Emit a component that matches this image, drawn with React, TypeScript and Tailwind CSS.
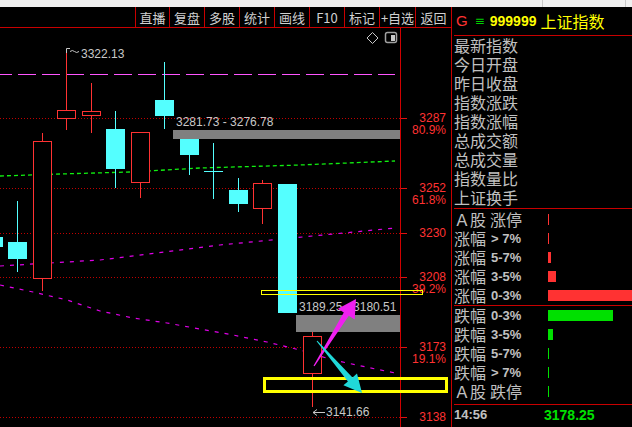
import React from "react";

const RED = "#ff3232";
const CYAN = "#54ffff";
const GRID = "#c00000";

type Candle = { x: number; t: number; b: number; wt: number; wb: number; up: boolean };

const candles: Candle[] = [
  { x: -16, t: 237, b: 247, wt: 237, wb: 247, up: false },
  { x: 8, t: 242, b: 259, wt: 201, wb: 272, up: false },
  { x: 33, t: 141, b: 279, wt: 133, wb: 291, up: true },
  { x: 57, t: 110, b: 119, wt: 50, wb: 130, up: true },
  { x: 82, t: 111, b: 116, wt: 83, wb: 133, up: true },
  { x: 106, t: 129, b: 169, wt: 111, wb: 188, up: false },
  { x: 131, t: 132, b: 183, wt: 132, wb: 198, up: true },
  { x: 155, t: 100, b: 116, wt: 62, wb: 129, up: false },
  { x: 180, t: 137, b: 155, wt: 137, wb: 175, up: false },
  { x: 204, t: 171, b: 172, wt: 143, wb: 199, up: false },
  { x: 229, t: 190, b: 204, wt: 178, wb: 212, up: false },
  { x: 253, t: 183, b: 209, wt: 180, wb: 224, up: true },
  { x: 278, t: 184, b: 313, wt: 184, wb: 313, up: false },
  { x: 303, t: 336, b: 374, wt: 332, wb: 407, up: true },
];

const levels = [
  { y: 118, price: "3287", pct: "80.9%" },
  { y: 188, price: "3252", pct: "61.8%" },
  { y: 233, price: "3230" },
  { y: 277, price: "3208", pct: "39.2%" },
  { y: 347, price: "3173", pct: "19.1%" },
  { y: 417, price: "3138" },
];

const tools = [
  { label: "直播", w: "w-[34px]" },
  { label: "复盘", w: "w-[35px]" },
  { label: "多股", w: "w-[35px]" },
  { label: "统计", w: "w-[35px]" },
  { label: "画线", w: "w-[35px]" },
  { label: "F10", w: "w-[35px]" },
  { label: "标记", w: "w-[35px]" },
  { label: "+自选", w: "w-[36px]" },
  { label: "返回", w: "w-[36px]" },
];

const infoRows = ["最新指数", "今日开盘", "昨日收盘", "指数涨跌", "指数涨幅", "总成交额", "总成交量", "指数量比", "上证换手"];

type Dist = { a: string; b: string; cjk?: boolean; w: number };

const upRows: Dist[] = [
  { a: "Ａ股", b: "涨停", cjk: true, w: 1 },
  { a: "涨幅", b: "> 7%", w: 1 },
  { a: "涨幅", b: "5-7%", w: 3 },
  { a: "涨幅", b: "3-5%", w: 8 },
  { a: "涨幅", b: "0-3%", w: -1 },
];

const downRows: Dist[] = [
  { a: "跌幅", b: "0-3%", w: 65 },
  { a: "跌幅", b: "3-5%", w: 5 },
  { a: "跌幅", b: "5-7%", w: 1 },
  { a: "跌幅", b: "> 7%", w: 1 },
  { a: "Ａ股", b: "跌停", cjk: true, w: 1 },
];

const pts = (p: number[][]) => p.map((q) => q.join(",")).join(" ");

function Chart() {
  return (
    <svg width={451} height={399} viewBox="0 28 451 399" className="block" shapeRendering="crispEdges">
      {/* fib levels */}
      {levels.map((l) => (
        <g key={l.price}>
          <line x1={0} x2={400} y1={l.y + 0.5} y2={l.y + 0.5} stroke={GRID} strokeDasharray="1 2" />
          <line x1={400} x2={407} y1={l.y + 0.5} y2={l.y + 0.5} stroke="#e01010" />
          <text x={446} y={l.y + 4} textAnchor="end" fill={RED} fontSize={12} fontFamily="Liberation Sans">
            {l.price}
          </text>
          {l.pct && (
            <text x={446} y={l.y + 16} textAnchor="end" fill={RED} fontSize={12} fontFamily="Liberation Sans">
              {l.pct}
            </text>
          )}
        </g>
      ))}
      <line x1={400.5} x2={400.5} y1={28} y2={427} stroke="#d00000" />

      {/* moving averages */}
      <line x1={0} x2={395} y1={74.5} y2={74.5} stroke="#ff55ff" strokeWidth={1.5} strokeDasharray="18 6" strokeDashoffset={6} />
      <polyline
        fill="none"
        stroke="#10f010"
        strokeWidth={1.3}
        strokeDasharray="4 3"
        shapeRendering="auto"
        points={pts([[0, 176], [60, 174], [130, 172], [200, 168], [300, 165], [395, 161]])}
      />
      <polyline fill="none" stroke="#e000e8" strokeWidth={1.2} strokeDasharray="4 6" shapeRendering="auto" points={pts([[0, 266], [100, 260], [220, 245], [395, 228]])} />
      <polyline
        fill="none"
        stroke="#e000e8"
        strokeWidth={1.2}
        strokeDasharray="4 6"
        shapeRendering="auto"
        points={pts([[0, 285], [33, 292], [67, 300], [100, 311], [133, 318], [167, 323], [200, 329], [233, 335], [267, 342], [300, 350], [333, 360], [366, 367], [395, 373]])}
      />

      {/* candles */}
      {candles.map((c, i) => {
        const cx = c.x + 9.5;
        if (c.up) {
          return (
            <g key={i} stroke={RED}>
              <line x1={cx} x2={cx} y1={c.wt} y2={c.t} />
              <line x1={cx} x2={cx} y1={c.b} y2={c.wb} />
              <rect x={c.x + 0.5} y={c.t + 0.5} width={18} height={c.b - c.t - 1} fill="#000" />
            </g>
          );
        }
        return (
          <g key={i}>
            <line x1={cx} x2={cx} y1={c.wt} y2={c.wb} stroke={CYAN} />
            <rect x={c.x} y={c.t} width={19} height={Math.max(c.b - c.t, 1)} fill={CYAN} />
          </g>
        );
      })}

      {/* zones */}
      <rect x={173} y={130} width={227} height={9} fill="#808080" />
      <rect x={296} y={315} width={104} height={17} fill="#808080" />
      <rect x={261.5} y={290.5} width={161} height={3.5} fill="none" stroke="#ffff00" />
      <rect x={264.5} y={378.5} width={182} height={13} fill="none" stroke="#ffff00" strokeWidth={3} />

      {/* labels */}
      <g fill="#c8c8c8" fontSize={12} fontFamily="Liberation Sans">
        <text x={81} y={58}>3322.13</text>
        <text x={176} y={126}>3281.73 - 3276.78</text>
        <text x={299} y={311}>3189.25 - 3180.51</text>
        <text x={326} y={416}>3141.66</text>
      </g>
      <g stroke="#c8c8c8" fill="none" shapeRendering="auto">
        <path d="M66.5 53 L66.5 48.5 L70 48.5" />
        <path d="M70 51.5 Q72.5 49.5 74.5 51.5 Q76.5 53.5 79 51.5" />
        <path d="M313 412.5 L325 412.5 M313 412.5 L317 409.5 M313 412.5 L317 415.5" />
        <path d="M372.5 32.5 L378 38 L372.5 43.5 L367 38 Z" />
        <rect x={385.5} y={32.5} width={11} height={10} rx={2} stroke="#a0a0a0" strokeWidth={1.5} />
      </g>
      <rect x={391} y={35} width={4} height={6} fill="#c8c8c8" />

      {/* arrows */}
      <polygon
        shapeRendering="auto"
        fill="#f020f0"
        points={pts([[313.5, 365.7], [343.8, 312.6], [337.9, 308.8], [356, 299], [354.7, 319.6], [348.8, 315.8], [314.5, 366.3]])}
      />
      <polygon
        shapeRendering="auto"
        fill="#20d8d8"
        points={pts([[316.6, 341.3], [347.9, 381.4], [343.4, 385.3], [362, 393], [357, 373.5], [352.5, 377.4], [317.4, 340.7]])}
      />
    </svg>
  );
}

function DistRow({ row, color }: { row: Dist; color: string }) {
  return (
    <div className="flex h-[19px] items-center">
      <div className="flex w-[94px] items-center text-[16px] leading-[19px] text-[#c0c0c0]">
        <span>{row.a}</span>
        {row.cjk ? (
          <span className="ml-[4px]">{row.b}</span>
        ) : (
          <span className="ml-[5px] font-['Liberation_Sans'] text-[13px] font-bold">{row.b}</span>
        )}
      </div>
      {row.w < 0 ? (
        <div className="h-[11px] flex-1" style={{ backgroundColor: color }} />
      ) : (
        <div className="h-[11px]" style={{ width: row.w, backgroundColor: color }} />
      )}
    </div>
  );
}

export default function App() {
  return (
    <div className="h-[427px] w-[632px] overflow-hidden bg-black font-['Noto_Sans_CJK_SC',sans-serif]">
      <div className="flex h-[7px] bg-[#f0f0f0]">
        <div className="w-[542px]" />
        <div className="w-[83px] border-l border-[#c8c8c8]" />
        <div className="flex-1 border-l border-[#c8c8c8]" />
      </div>
      <div className="flex h-[420px]">
        <div className="flex w-[451px] flex-col">
          <div className="flex h-[21px] justify-end border-b border-[#c80000]">
            {tools.map((t) => (
              <div
                key={t.label}
                className={`${t.w} flex items-center justify-center border-l border-[#c80000] text-[13px] leading-none text-[#d0d0d0]`}
              >
                {t.label}
              </div>
            ))}
          </div>
          <Chart />
        </div>

        <div className="flex flex-1 flex-col border-l border-[#c80000] pl-[2px]">
          <div className="flex h-[29px] items-center border-b border-[#c80000] pl-[2px]">
            <span className="font-['Liberation_Sans'] text-[15px] text-[#ff3232]">G</span>
            <span className="ml-[7px] font-['DejaVu_Sans'] text-[12px] text-[#00d000]">≡</span>
            <span className="ml-[5px] font-['Liberation_Sans'] text-[14px] font-bold text-[#ffff00]">999999</span>
            <span className="ml-[4px] text-[16px] text-[#ffff00]">上证指数</span>
          </div>
          <div className="border-b border-[#c80000] pb-[1px]">
            {infoRows.map((r) => (
              <div key={r} className="h-[19px] text-[16px] leading-[19px] text-[#c0c0c0]">
                {r}
              </div>
            ))}
          </div>
          <div className="border-b border-[#c80000] pt-[1px]">
            {upRows.map((r) => (
              <DistRow key={r.a + r.b} row={r} color="#ff3232" />
            ))}
          </div>
          <div className="border-b border-[#c80000] pb-[3px]">
            {downRows.map((r) => (
              <DistRow key={r.a + r.b} row={r} color="#00e000" />
            ))}
          </div>
          <div className="flex h-[20px] items-center font-['Liberation_Sans'] font-bold">
            <span className="w-[90px] text-[13px] text-[#c0c0c0]">14:56</span>
            <span className="text-[14px] text-[#00e000]">3178.25</span>
          </div>
        </div>
      </div>
    </div>
  );
}
